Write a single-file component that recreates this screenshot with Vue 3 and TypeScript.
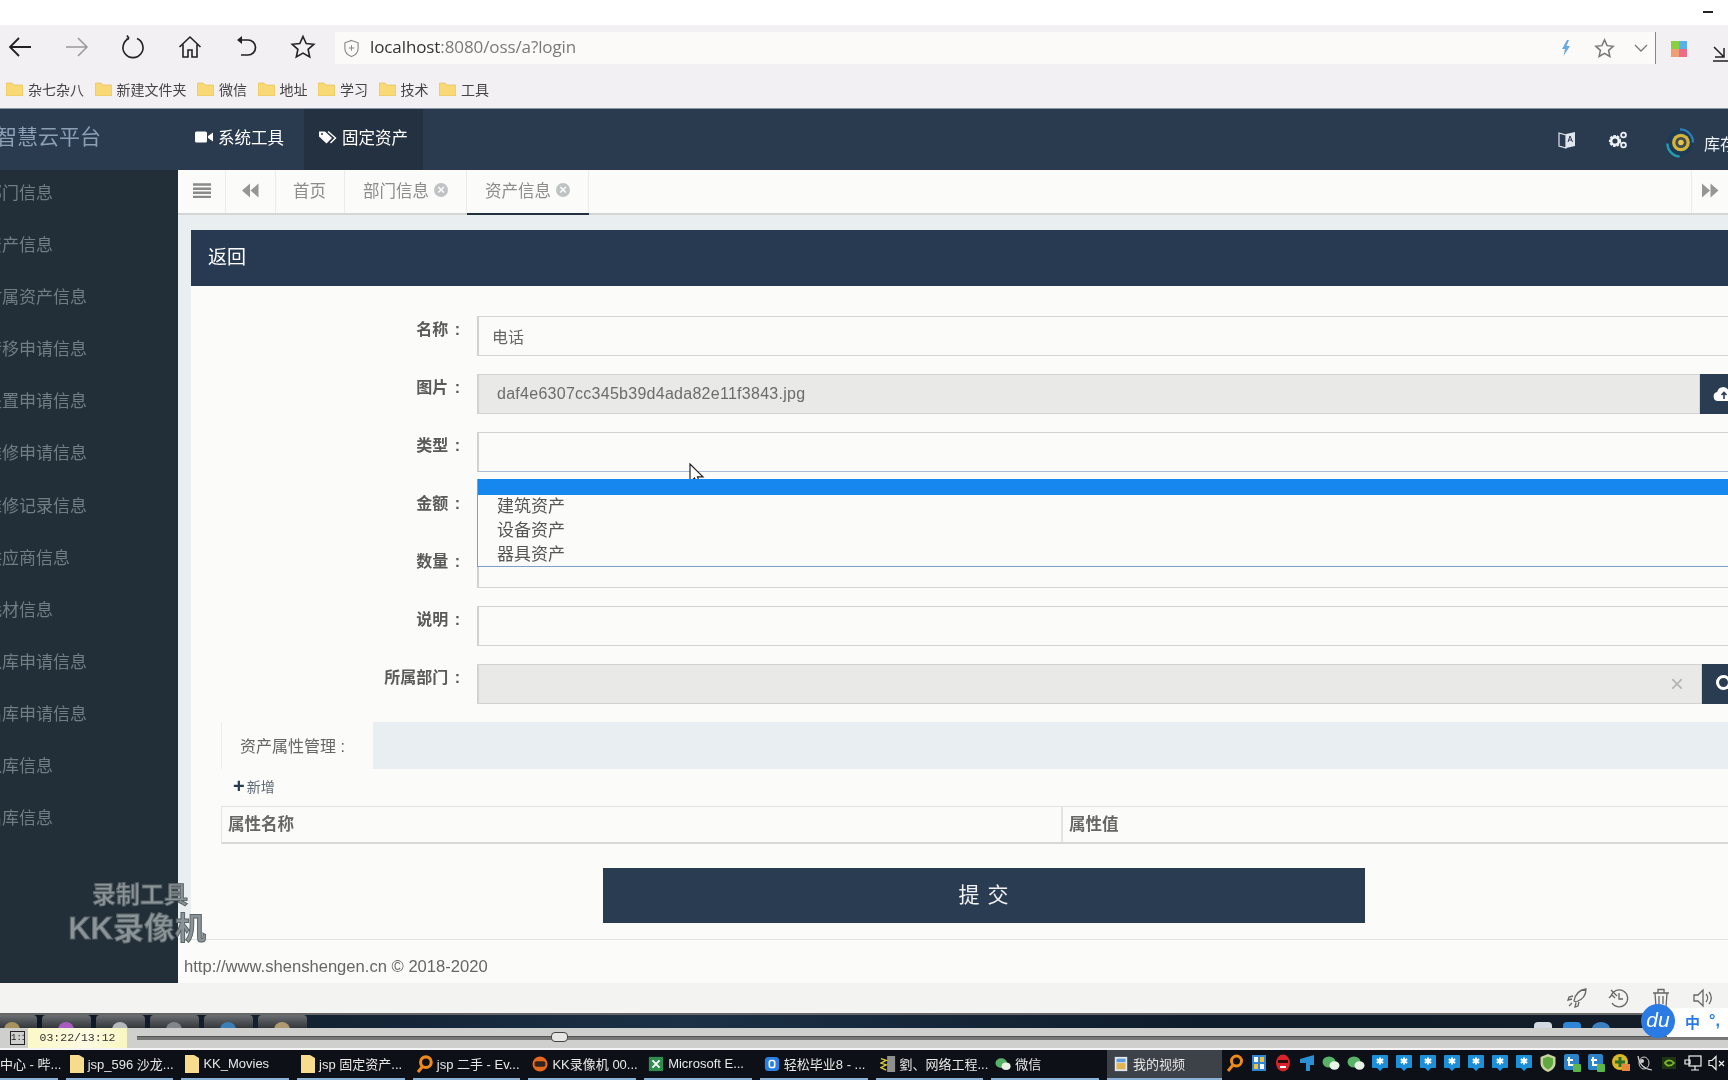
<script setup lang="ts">
type TaskIcon = 'none' | 'folder' | 'search' | 'kk' | 'excel' | 'app' | 'person' | 'wechat' | 'doc'
type TrayIcon = 'search' | 'grid' | 'red' | 'pin' | 'wechat' | 'star' | 'shield' | 'tc' | 'plus' | 'sat' | 'nv' | 'net' | 'mute'

const sideItems = [
  '部门信息', '资产信息', '附属资产信息', '转移申请信息', '处置申请信息', '维修申请信息', '维修记录信息',
  '供应商信息', '耗材信息', '入库申请信息', '出库申请信息', '入库信息', '出库信息',
]
const bookmarks = ['杂七杂八', '新建文件夹', '微信', '地址', '学习', '技术', '工具']
const thumbs = ['#a8935f', '#a85cc0', '#b4b9bd', '#80868b', '#3a7fb8', '#b09a70']
const tasks: Array<{ label: string; icon: TaskIcon; active?: boolean }> = [
  { label: '中心 - 哔...', icon: 'none' },
  { label: 'jsp_596 沙龙...', icon: 'folder' },
  { label: 'KK_Movies', icon: 'folder' },
  { label: 'jsp 固定资产...', icon: 'folder' },
  { label: 'jsp 二手 - Ev...', icon: 'search' },
  { label: 'KK录像机 00...', icon: 'kk' },
  { label: 'Microsoft E...', icon: 'excel' },
  { label: '轻松毕业8 - ...', icon: 'app' },
  { label: '劉、网络工程...', icon: 'person' },
  { label: '微信', icon: 'wechat' },
  { label: '我的视频', icon: 'doc', active: true },
]
const tray: TrayIcon[] = [
  'search', 'grid', 'red', 'pin', 'wechat', 'wechat', 'star', 'star', 'star', 'star', 'star', 'star', 'star',
  'shield', 'tc', 'tc', 'plus', 'sat', 'nv', 'net', 'mute',
]
</script>

<template>
  <div class="screen">
    <div class="top-strip"><span class="minimize"></span></div>

    <div class="toolbar">
      <div class="nav-icons">
        <svg class="nav-icon" viewBox="0 0 26 26"><path d="M24 13H3M12 4l-9 9 9 9" fill="none" stroke="#222" stroke-width="1.8" /></svg>
        <svg class="nav-icon" viewBox="0 0 26 26"><path d="M2 13h21M14 4l9 9-9 9" fill="none" stroke="#999" stroke-width="1.5" /></svg>
        <svg class="nav-icon" viewBox="0 0 26 26"><path d="M9 4.5a10 10 0 1 0 8 0M9 4.5l-2-3M9 4.5l-3 1" fill="none" stroke="#222" stroke-width="1.6" /></svg>
        <svg class="nav-icon" viewBox="0 0 26 26"><path d="M2.5 13L13 3l10.500 10M6 10.500V23h5v-7h4v7h5V10.500" fill="none" stroke="#222" stroke-width="1.6" /></svg>
        <svg class="nav-icon" viewBox="0 0 26 26"><path d="M5 6h10a7.5 7.5 0 0 1 0 15H8" fill="none" stroke="#222" stroke-width="1.7" /><path d="M9 2L4 6l5 4z" fill="#222" /></svg>
        <svg class="nav-icon" viewBox="0 0 26 26"><path d="M13 2.5l3.200 7 7.600.8-5.700 5.100 1.600 7.600-6.700-3.900-6.700 3.900 1.600-7.600-5.700-5.100 7.600-.8z" fill="none" stroke="#222" stroke-width="1.6" /></svg>
      </div>
      <div class="address">
        <svg class="shield" viewBox="0 0 18 20"><path d="M9 1.500l7 2.500v6c0 4-3 7-7 8.500-4-1.500-7-4.500-7-8.500V4z" fill="none" stroke="#888" stroke-width="1.2" /><path d="M9 6.500v6M6 9.500h6" stroke="#888" stroke-width="1.1" /></svg>
        <span class="url"><b>localhost</b>:8080/oss/a?login</span>
        <span class="address-end">
          <svg class="bolt" viewBox="0 0 10 16"><path d="M6 0L1 9h3l-1.500 7L9 6H5.500L8 0z" fill="#6aa9e0" /></svg>
          <svg class="addr-star" viewBox="0 0 22 22"><path d="M11 2l2.700 6 6.300.7-4.700 4.200 1.300 6.400-5.600-3.300-5.600 3.300 1.300-6.400L2 8.700 8.300 8z" fill="none" stroke="#777" stroke-width="1.6" /></svg>
          <svg class="chev" viewBox="0 0 14 8"><path d="M1 1l6 6 6-6" fill="none" stroke="#777" stroke-width="1.3" /></svg>
        </span>
      </div>
      <div class="tool-right">
        <span class="apps"><i class="g"></i><i class="b"></i><i class="o"></i><i class="r"></i></span>
        <svg class="download" viewBox="0 0 16 20"><path d="M1 4l10 10M11 5v9H2M0 18h16" fill="none" stroke="#222" stroke-width="1.5" /></svg>
      </div>
    </div>

    <div class="bookmarks">
      <span v-for="name in bookmarks" :key="name" class="bookmark">
        <svg class="folder" viewBox="0 0 17 14"><path d="M0 2a1 1 0 0 1 1-1h5l2 2h8a1 1 0 0 1 1 1v9a1 1 0 0 1-1 1H1a1 1 0 0 1-1-1z" fill="#f8d976" stroke="#e0b94a" stroke-width=".6" /></svg>
        {{ name }}
      </span>
    </div>

    <header class="app-header">
      <div class="logo">智慧云平台</div>
      <nav class="top-nav">
        <a class="top-nav__item">
          <svg class="top-nav__icon" viewBox="0 0 18 14"><rect x="0" y="1.500" width="12" height="11" rx="1.500" fill="#fff" /><path d="M13 6l5-3.500v9L13 8z" fill="#fff" /></svg>
          系统工具
        </a>
        <a class="top-nav__item top-nav__item--active">
          <svg class="top-nav__icon" viewBox="0 0 18 14"><path d="M0 1.500h6l7 6.500-5.500 5.500L0 6.500z" fill="#fff" /><path d="M9 1.500l7.500 6.500-5 5" fill="none" stroke="#fff" stroke-width="1.4" /><circle cx="3" cy="4" r="1" fill="#223040" /></svg>
          固定资产
        </a>
      </nav>
      <div class="header-right">
        <svg class="book-icon" viewBox="0 0 18 18"><path d="M1 2l7 2v13l-7-2z" fill="none" stroke="#dfe6ee" stroke-width="1.2" /><path d="M8 3l9-2v14l-9 2z" fill="#dfe6ee" /><path d="M10 11l2-6 2.500 6M10.800 9h3" stroke="#2a3b50" stroke-width="1" fill="none" /></svg>
        <svg class="cog-icon" viewBox="0 0 20 18">
          <circle cx="7" cy="10" r="4.500" fill="none" stroke="#eef2f6" stroke-width="3.200" stroke-dasharray="2.200 1" />
          <circle cx="7" cy="10" r="3.800" fill="none" stroke="#eef2f6" stroke-width="2.400" />
          <circle cx="15.500" cy="4" r="2.400" fill="none" stroke="#eef2f6" stroke-width="1.800" />
          <circle cx="15.500" cy="14" r="2.400" fill="none" stroke="#eef2f6" stroke-width="1.800" />
        </svg>
        <svg class="avatar" viewBox="0 0 30 32">
          <circle cx="15" cy="16" r="14" fill="#1c3a56" />
          <path d="M15 2a14 14 0 0 1 14 14" fill="none" stroke="#2c7fb8" stroke-width="2.500" />
          <path d="M1.500 17a14 14 0 0 0 13 14" fill="none" stroke="#23a0b0" stroke-width="2.500" />
          <circle cx="16" cy="16" r="9.500" fill="#d4b53a" />
          <circle cx="16" cy="16" r="6" fill="#3f4a4f" />
          <circle cx="16" cy="16" r="3" fill="#e4c64c" />
        </svg>
        <span class="username">库存</span>
      </div>
    </header>

    <div class="app-body">
      <aside class="sidebar">
        <a v-for="item in sideItems" :key="item" class="sidebar__item">{{ item }}</a>
      </aside>

      <main class="main">
        <div class="tabs">
          <span class="tabs__btn tabs__btn--menu">
            <svg width="18" height="15" viewBox="0 0 18 15"><path d="M0 1.500h18M0 5.700h18M0 9.800h18M0 14h18" stroke="#8a8a8a" stroke-width="2.4" /></svg>
          </span>
          <span class="tabs__btn tabs__btn--back">
            <svg width="17" height="15" viewBox="0 0 17 14"><path d="M8 0v14L0 7zM16.500 0v14L8.500 7z" fill="#969696" /></svg>
          </span>
          <a class="tab tab--home">首页</a>
          <a class="tab">部门信息<span class="tab__close">×</span></a>
          <a class="tab tab--active">资产信息<span class="tab__close">×</span></a>
          <span class="tabs__btn tabs__btn--next">
            <svg width="17" height="15" viewBox="0 0 17 14"><path d="M0 0v14l8-7zM8.500 0v14l8-7z" fill="#969696" /></svg>
          </span>
        </div>

        <div class="content">
          <section class="card">
            <div class="card__head">返回</div>
            <form class="form" @submit.prevent>
              <div class="row">
                <label class="row__label">名称 :</label>
                <div class="field">电话</div>
              </div>
              <div class="row">
                <label class="row__label">图片 :</label>
                <div class="field field--disabled field--file">daf4e6307cc345b39d4ada82e11f3843.jpg</div>
                <span class="addon addon--upload">
                  <svg width="22" height="16" viewBox="0 0 22 16"><path d="M5 15a4.500 4.500 0 0 1-.8-8.900A6 6 0 0 1 15.500 4.500 5 5 0 0 1 17 15z" fill="#fff" /><path d="M11 13V7M8.500 9L11 6.500 13.500 9" fill="none" stroke="#2a3c52" stroke-width="1.6" /></svg>
                </span>
              </div>
              <div class="row">
                <label class="row__label">类型 :</label>
                <div class="field field--open">
                  <div class="options">
                    <div class="options__blank"></div>
                    <div class="options__item">建筑资产</div>
                    <div class="options__item">设备资产</div>
                    <div class="options__item">器具资产</div>
                  </div>
                </div>
              </div>
              <div class="row">
                <label class="row__label">金额 :</label>
                <div class="field"></div>
              </div>
              <div class="row">
                <label class="row__label">数量 :</label>
                <div class="field"></div>
              </div>
              <div class="row">
                <label class="row__label">说明 :</label>
                <div class="field"></div>
              </div>
              <div class="row">
                <label class="row__label">所属部门 :</label>
                <div class="field field--disabled field--clear"><span class="clear">×</span></div>
                <span class="addon addon--search">
                  <svg width="20" height="20" viewBox="0 0 20 20"><circle cx="8.500" cy="8.500" r="6" fill="none" stroke="#fff" stroke-width="3" /><path d="M13 13l5.500 5.500" stroke="#fff" stroke-width="3" /></svg>
                </span>
              </div>

              <div class="attr">
                <div class="attr__bar"><span class="attr__tab">资产属性管理 :</span></div>
                <a class="attr__add"><b>+</b>新增</a>
                <div class="attr__table">
                  <div class="attr__cell attr__cell--name">属性名称</div>
                  <div class="attr__cell">属性值</div>
                </div>
              </div>

              <button type="button" class="submit">提 交</button>
            </form>
          </section>
          <footer class="page-footer">http://www.shenshengen.cn © 2018-2020</footer>
        </div>
      </main>
    </div>

    <div class="player-tools">
      <svg class="tool" viewBox="0 0 22 22"><path d="M8 14C9 8 13 3 20 2c0 7-4 11-10 13zM7 9l-4 1-1 3 4-1M13 15l-1 4-3 1 1-4M6 16l-3 3" fill="none" stroke="#666" stroke-width="1.3" /></svg>
      <svg class="tool" viewBox="0 0 22 22"><path d="M3 9a8.500 8.500 0 1 1 1 7M3 3l6 6M1 11l3-3 3 3" fill="none" stroke="#666" stroke-width="1.3" /><path d="M11 6v6h4" fill="none" stroke="#666" stroke-width="1.3" /></svg>
      <svg class="tool" viewBox="0 0 22 22"><path d="M3 6h16M8 6V2.500h6V6M5 6l1 14h10l1-14M9 9v8M13 9v8" fill="none" stroke="#666" stroke-width="1.3" /></svg>
      <svg class="tool" viewBox="0 0 22 22"><path d="M2 8v6h4l5 5V3L6 8z" fill="none" stroke="#666" stroke-width="1.3" /><path d="M14 7a6 6 0 0 1 0 8M17 5a9 9 0 0 1 0 12" fill="none" stroke="#666" stroke-width="1.3" /></svg>
    </div>

    <div class="thumb-band">
      <span v-for="(color, i) in thumbs" :key="i" class="thumb"><i :style="{ background: color }"></i></span>
      <span class="band-icons"><i class="bi bi--w"></i><i class="bi bi--b"></i><i class="bi bi--r"></i></span>
    </div>

    <div class="player-bar">
      <span class="ratio">1:1</span>
      <span class="time">03:22/13:12</span>
      <span class="seek"><i class="seek__knob"></i></span>
    </div>

    <div class="taskbar">
      <div class="tasks">
        <div v-for="task in tasks" :key="task.label" class="task" :class="{ 'task--active': task.active, 'task--plain': task.icon === 'none' }">
          <svg v-if="task.icon === 'folder'" class="task__icon task__icon--folder" viewBox="0 0 14 20"><path d="M0 1h9l5 3v15H0z" fill="#f6dc8c" /></svg>
          <svg v-else-if="task.icon === 'search'" class="task__icon" viewBox="0 0 18 20"><circle cx="10" cy="8" r="6" fill="none" stroke="#ee8a1c" stroke-width="3.5" /><path d="M6 13l-5 6" stroke="#ee8a1c" stroke-width="3.5" /></svg>
          <svg v-else-if="task.icon === 'kk'" class="task__icon" viewBox="0 0 18 20"><circle cx="9" cy="10" r="8.500" fill="#e2691f" /><rect x="3" y="7" width="12" height="6" rx="2" fill="#33231b" /></svg>
          <svg v-else-if="task.icon === 'excel'" class="task__icon" viewBox="0 0 18 20"><rect x="1" y="2" width="16" height="16" fill="#2f8d4e" /><path d="M5 6l8 8M13 6l-8 8" stroke="#fff" stroke-width="2" /></svg>
          <svg v-else-if="task.icon === 'app'" class="task__icon" viewBox="0 0 18 20"><rect x="1" y="2" width="16" height="16" rx="4" fill="#2b7fe0" /><rect x="6" y="6" width="6" height="8" rx="2" fill="none" stroke="#fff" stroke-width="1.8" /></svg>
          <svg v-else-if="task.icon === 'person'" class="task__icon" viewBox="0 0 18 20"><rect x="8" y="1" width="9" height="18" fill="#8f8f8c" /><path d="M1 4l6 2-6 3 6 2-6 3 6 3" fill="none" stroke="#d7c83c" stroke-width="1.6" /></svg>
          <svg v-else-if="task.icon === 'wechat'" class="task__icon" viewBox="0 0 18 20"><ellipse cx="7" cy="9" rx="6.500" ry="5.500" fill="#58b368" /><ellipse cx="12.500" cy="12.500" rx="5" ry="4.200" fill="#e8f2e6" /></svg>
          <svg v-else-if="task.icon === 'doc'" class="task__icon" viewBox="0 0 18 20"><rect x="2" y="2" width="14" height="16" fill="#dfe7f0" /><rect x="4" y="9" width="10" height="7" fill="#e0b552" /><rect x="4" y="4" width="10" height="4" fill="#5d9ad6" /></svg>
          <span class="task__label">{{ task.label }}</span>
        </div>
      </div>

      <div class="tray">
        <span v-for="(icon, i) in tray" :key="i" class="tray__slot">
          <svg v-if="icon === 'search'" viewBox="0 0 18 18"><circle cx="10.500" cy="7" r="5" fill="none" stroke="#ee8a1c" stroke-width="3" /><path d="M7 11l-5 6" stroke="#ee8a1c" stroke-width="3" /></svg>
          <svg v-else-if="icon === 'grid'" viewBox="0 0 18 18"><rect x="2" y="1" width="14" height="16" fill="#2f86d6" /><rect x="4" y="3" width="4" height="5" fill="#fff" /><rect x="10" y="3" width="4" height="5" fill="#f2c23a" /><rect x="4" y="10" width="4" height="5" fill="#f2c23a" /><rect x="10" y="10" width="4" height="5" fill="#fff" /></svg>
          <svg v-else-if="icon === 'red'" viewBox="0 0 18 18"><ellipse cx="9" cy="9" rx="7" ry="8.500" fill="#d8232a" /><rect x="4" y="6" width="10" height="3" fill="#2a0c0c" /><rect x="6" y="12" width="6" height="2" fill="#fff" /></svg>
          <svg v-else-if="icon === 'pin'" viewBox="0 0 18 18"><path d="M2 5l14-4v10h-4v6H8v-8H2z" fill="#2b8fd6" /></svg>
          <svg v-else-if="icon === 'wechat'" viewBox="0 0 18 18"><ellipse cx="7" cy="8" rx="6.500" ry="5.500" fill="#58b368" /><ellipse cx="12.500" cy="11.500" rx="5" ry="4.200" fill="#e8f2e6" /></svg>
          <svg v-else-if="icon === 'star'" viewBox="0 0 18 18"><path d="M2 1h14a1 1 0 0 1 1 1v11a1 1 0 0 1-1 1h-4l-3 3-3-3H2a1 1 0 0 1-1-1V2a1 1 0 0 1 1-1z" fill="#1b8fd8" /><path d="M9 3.500v7M5.800 5.200l6.400 3.600M12.200 5.200L5.800 8.800" stroke="#fff" stroke-width="1.9" /></svg>
          <svg v-else-if="icon === 'shield'" viewBox="0 0 18 18"><path d="M9 0l7.500 3v6c0 4-3 7.500-7.500 9-4.500-1.500-7.500-5-7.500-9V3z" fill="#c9d4a0" /><path d="M9 2.500l5 2v4.500c0 3-2 5-5 6.500-3-1.500-5-3.500-5-6.500V4.500z" fill="#5fa93f" /></svg>
          <svg v-else-if="icon === 'tc'" viewBox="0 0 18 18"><rect x="1" y="0" width="15" height="16" rx="2" fill="#2e84c8" /><path d="M6 3v8h5M4 6h6" fill="none" stroke="#fff" stroke-width="2" /><rect x="10" y="10" width="8" height="8" rx="1" fill="#5bb64a" /></svg>
          <svg v-else-if="icon === 'plus'" viewBox="0 0 18 18"><circle cx="8" cy="8" r="8" fill="#d8b826" /><path d="M8 3v10M3 8h10" stroke="#2c6d2c" stroke-width="3" /><rect x="10" y="10" width="8" height="7" fill="#e58a3a" /></svg>
          <svg v-else-if="icon === 'sat'" viewBox="0 0 18 18"><path d="M2 2c1 8 6 13 14 14" fill="none" stroke="#cfcfcf" stroke-width="1.2" /><ellipse cx="8" cy="9" rx="5" ry="6" fill="none" stroke="#cfcfcf" stroke-width="1" /><circle cx="6" cy="7" r="2" fill="#cfcfcf" /></svg>
          <svg v-else-if="icon === 'nv'" viewBox="0 0 18 18"><rect x="2" y="3" width="14" height="12" fill="#1f3412" /><path d="M5 9c2-3.500 6-3.500 9 0-3 3.500-7 3.500-9 0z" fill="none" stroke="#78b82a" stroke-width="1.8" /></svg>
          <svg v-else-if="icon === 'net'" viewBox="0 0 18 18"><rect x="5" y="2" width="12" height="10" fill="none" stroke="#f2f2f2" stroke-width="1.2" /><path d="M1 6h5v4H1zM11 12v4M7 16h8" fill="none" stroke="#f2f2f2" stroke-width="1.2" /></svg>
          <svg v-else viewBox="0 0 18 18"><path d="M1 6.500v5h3l4 4v-13l-4 4z" fill="none" stroke="#f2f2f2" stroke-width="1.2" /><path d="M11 7l5 5M16 7l-5 5" stroke="#f2f2f2" stroke-width="1.2" /></svg>
        </span>
      </div>
    </div>

    <!-- overlays: recorder watermark, mouse pointer, input method badge -->
    <div class="watermark">
      <div class="watermark__small">录制工具</div>
      <div class="watermark__big">KK录像机</div>
    </div>
    <svg class="cursor" viewBox="0 0 16 25"><path d="M1 1v18l4.500-4 3 7.500 3-1.300-3-7.300H14z" fill="#fff" stroke="#222" stroke-width="1.2" /></svg>
    <div class="ime">
      <span class="ime__du">du</span>
      <span class="ime__zh">中</span>
      <span class="ime__dot">°,</span>
    </div>
  </div>
</template>

<style>
html,
body {
  margin: 0;
  background: #fff;
  overflow: hidden;
}
</style>

<style scoped>
/* the reference is a frame of a compressed video, hence the slight softening */
.screen {
  position: relative;
  display: flex;
  flex-direction: column;
  width: 1728px;
  height: 1080px;
  overflow: hidden;
  font-family: "Liberation Sans", "Noto Sans CJK SC", sans-serif;
  color: #555;
  background: #fff;
  filter: blur(0.4px);
}

.top-strip {
  flex: 0 0 25px;
  display: flex;
  justify-content: flex-end;
  align-items: flex-start;
  background: #fff;
}

.minimize {
  width: 10px;
  height: 1.5px;
  margin: 11px 15px 0 0;
  background: #222;
}

.toolbar {
  flex: 0 0 53px;
  display: flex;
  align-items: flex-start;
  background: #f2f0f2;
}

.nav-icons {
  display: flex;
  width: 335px;
  flex: 0 0 335px;
  gap: 30.5px;
  padding: 9px 0 0 7px;
  box-sizing: border-box;
}

.nav-icon {
  width: 26px;
  height: 26px;
  flex: 0 0 26px;
}

.address {
  flex: 0 0 1320px;
  height: 32px;
  margin-top: 7px;
  display: flex;
  align-items: center;
  background: #fbfaf8;
  border-right: 1px solid #888;
}

.shield {
  width: 17px;
  height: 19px;
  margin-left: 8px;
}

.url {
  margin: 0 0 3px 10px;
  font-family: "Open Sans", "Noto Sans", sans-serif;
  font-size: 17px;
  color: #7a7a7a;
  letter-spacing: -0.1px;
}

.url b {
  font-weight: 400;
  color: #333;
}

.address-end {
  margin-left: auto;
  display: flex;
  align-items: center;
}

.bolt {
  width: 10px;
  height: 16px;
  margin-right: 23px;
}

.addr-star {
  width: 21px;
  height: 21px;
  margin-right: 19px;
}

.chev {
  width: 14px;
  height: 8px;
  margin-right: 7px;
}

.tool-right {
  display: flex;
  align-items: center;
  height: 32px;
  margin-top: 8px;
  padding-left: 15px;
  gap: 26px;
}

.apps {
  display: grid;
  grid-template-columns: 8px 8px;
  grid-template-rows: 8px 8px;
}

.apps i {
  display: block;
}

.apps .g { background: #86d23e; }
.apps .b { background: #58b0ec; }
.apps .o { background: #ee9f73; }
.apps .r { background: #ea6c86; }

.download {
  width: 16px;
  height: 20px;
  flex: 0 0 16px;
  margin-top: 8px;
}

.bookmarks {
  flex: 0 0 30px;
  display: flex;
  align-items: center;
  gap: 10.5px;
  padding-left: 6px;
  padding-bottom: 9px;
  box-sizing: border-box;
  background: #f2f0f2;
  font-size: 14px;
  color: #444;
}

.bookmark {
  display: flex;
  align-items: center;
  gap: 5px;
}

.folder {
  width: 17px;
  height: 14px;
}

.app-header {
  flex: 0 0 62px;
  display: flex;
  align-items: stretch;
  background: #2a3b50;
  border-top: 1px solid #8a97a5;
  box-sizing: border-box;
}

.logo {
  width: 184px;
  margin-left: -4px;
  flex: 0 0 auto;
  line-height: 56px;
  font-size: 21px;
  color: #8ba0b5;
}

.top-nav {
  display: flex;
}

.top-nav__item {
  display: flex;
  align-items: center;
  gap: 5px;
  padding: 0 15px 6px;
  font-size: 16.5px;
  color: #fff;
}

.top-nav__item--active {
  margin-left: 5px;
  background: #243140;
}

.top-nav__icon {
  width: 18px;
  height: 14px;
}

.header-right {
  margin-left: auto;
  display: flex;
  align-items: center;
  width: 170px;
  flex: 0 0 170px;
  padding-top: 6px;
  box-sizing: border-box;
}

.book-icon {
  flex: 0 0 18px;
  height: 18px;
  margin: -6px 32px 0 0;
}

.cog-icon {
  flex: 0 0 20px;
  height: 18px;
  margin: -6px 38px 0 0;
}

.avatar {
  width: 28px;
  height: 31px;
  flex: 0 0 28px;
}

.username {
  margin-left: 10px;
  font-size: 16px;
  color: #eef2f6;
  white-space: nowrap;
}

.app-body {
  flex: 0 0 813px;
  display: flex;
  min-height: 0;
}

.sidebar {
  flex: 0 0 178px;
  background: #222f38;
  overflow: hidden;
}

.sidebar__item {
  display: block;
  height: 52.1px;
  margin-left: -15px;
  line-height: 48px;
  font-size: 17px;
  color: #727d84;
  white-space: nowrap;
}

.main {
  flex: 1;
  min-width: 0;
  display: flex;
  flex-direction: column;
  background: #e9eef1;
}

.tabs {
  flex: 0 0 45px;
  display: flex;
  align-items: stretch;
  box-sizing: border-box;
  background: #fbfbfa;
  border-bottom: 2px solid #d4d6d6;
  font-size: 16.5px;
  color: #8c8c8c;
}

.tabs__btn {
  display: flex;
  align-items: center;
  justify-content: center;
  padding-bottom: 3px;
  border-right: 1px solid #ececea;
}

.tabs__btn--menu {
  width: 47px;
}

.tabs__btn--back {
  width: 49px;
}

.tabs__btn--next {
  margin-left: auto;
  width: 36px;
  border-right: 0;
  border-left: 1px solid #ececea;
}

.tab {
  display: flex;
  align-items: center;
  gap: 5px;
  padding: 0 18px 4px;
  border-right: 1px solid #ececea;
}

.tab--home {
  padding-left: 17px;
}

.tab--active {
  box-shadow: 0 2px 0 #223040;
}

.tab__close {
  display: inline-flex;
  align-items: center;
  justify-content: center;
  width: 14px;
  height: 14px;
  border-radius: 50%;
  background: #bfc3c3;
  color: #fbfbfa;
  font-size: 13px;
  line-height: 14px;
  font-weight: 700;
}

.content {
  flex: 1;
  min-height: 0;
  display: flex;
  flex-direction: column;
  padding-top: 15px;
}

.card {
  flex: 1;
  min-height: 0;
  margin-left: 13px;
  display: flex;
  flex-direction: column;
  background: #fbfbf9;
}

.card__head {
  flex: 0 0 56px;
  padding-left: 17px;
  line-height: 56px;
  font-size: 19px;
  color: #fff;
  background: #283a52;
}

.form {
  width: 1569px;
  padding-top: 30px;
}

.row {
  display: flex;
  height: 40px;
  margin-bottom: 18px;
}

.row__label {
  flex: 0 0 269px;
  height: 28px;
  line-height: 28px;
  text-align: right;
  font-size: 16px;
  font-weight: 700;
  word-spacing: 2px;
  color: #5a5a5a;
  margin-right: 17px;
}

.field {
  position: relative;
  flex: 1;
  min-width: 0;
  box-sizing: border-box;
  padding-left: 13px;
  display: flex;
  align-items: center;
  border: 1px solid #d2d2d0;
  border-left-width: 2px;
  font-size: 16px;
  color: #666;
  background: #fbfbf9;
}

.field--disabled {
  background: #e9eae8;
}

.field--file {
  padding-left: 18px;
  letter-spacing: 0.27px;
  color: #6c6c6a;
}

.field--open {
  border-bottom-color: #a9bdd8;
}

.field--clear {
  justify-content: flex-end;
}

.clear {
  margin-right: 17px;
  font-size: 24px;
  line-height: 24px;
  color: #b5b5b5;
}

.options {
  position: absolute;
  z-index: 2;
  top: 46px;
  left: -2px;
  right: -1px;
  height: 88px;
  box-sizing: border-box;
  border-left: 1px solid #7d9cc6;
  border-bottom: 1px solid #7d9cc6;
  background: #fbfbf9;
}

.options__blank {
  height: 16px;
  background: #1787f0;
}

.options__item {
  height: 24px;
  line-height: 24px;
  padding-left: 19px;
  font-size: 17px;
  color: #555;
}

.addon {
  flex: 0 0 60px;
  display: flex;
  align-items: center;
  padding-left: 13px;
  box-sizing: border-box;
  background: #2a3c52;
}

.addon--search {
  flex-basis: 58px;
}

.attr {
  margin-left: 30px;
}

.attr__bar {
  height: 47px;
  background: #e8eef1;
}

.attr__tab {
  display: block;
  width: 152px;
  height: 47px;
  box-sizing: border-box;
  padding-left: 18px;
  line-height: 49px;
  font-size: 16px;
  color: #666;
  background: #fbfbf9;
  border-left: 1px solid #eeeeec;
}

.attr__add {
  display: flex;
  align-items: center;
  height: 37px;
  padding: 0 0 3px 12px;
  box-sizing: border-box;
  font-size: 14px;
  color: #5e6a76;
}

.attr__add b {
  margin-right: 2px;
  font-size: 20px;
  line-height: 20px;
  color: #2a3c52;
}

.attr__table {
  display: flex;
  height: 38px;
  box-sizing: border-box;
  border: 1px solid #e4e4e2;
  border-right: 0;
  border-bottom: 2px solid #d8d8d6;
}

.attr__cell {
  flex: 1;
  padding-left: 6px;
  line-height: 34px;
  font-size: 16.5px;
  font-weight: 700;
  color: #666;
}

.attr__cell--name {
  flex: 0 0 841px;
  border-right: 2px solid #e4e4e2;
  box-sizing: border-box;
}

.submit {
  display: block;
  width: 762px;
  height: 55px;
  margin: 24px 0 0 412px;
  padding: 0 0 5px;
  border: 0;
  background: #2a3c52;
  color: #f2f2f2;
  font-family: inherit;
  font-size: 21px;
  letter-spacing: 1px;
}

.page-footer {
  flex: 0 0 43px;
  box-sizing: border-box;
  padding: 10px 0 0 6px;
  line-height: 33px;
  font-size: 16.6px;
  color: #666;
  background: #fbfbf9;
  border-top: 1px solid #e2e3e1;
}

.player-tools {
  flex: 0 0 30px;
  display: flex;
  align-items: center;
  justify-content: flex-end;
  gap: 20px;
  padding-right: 14px;
  box-sizing: border-box;
  background: #f3f3f1;
}

.tool {
  width: 22px;
  height: 22px;
}

.thumb-band {
  flex: 0 0 15px;
  display: flex;
  align-items: flex-start;
  gap: 5px;
  margin-left: -12px;
  overflow: hidden;
  background: linear-gradient(90deg, #0c1522, #1c3146 40%, #0f1c2b 70%, #141d28);
  border-top: 2px solid #666;
  box-sizing: border-box;
}

.thumb {
  position: relative;
  flex: 0 0 49px;
  height: 15px;
  border-radius: 4px 4px 0 0;
  background: linear-gradient(#6b6f72, #2b2e32);
}

.thumb i {
  position: absolute;
  left: 16px;
  top: 7px;
  width: 16px;
  height: 16px;
  border-radius: 50%;
}

.band-icons {
  margin-left: auto;
  display: flex;
  gap: 11px;
  padding: 7px 118px 0 0;
}

.bi {
  width: 18px;
  height: 14px;
  border-radius: 4px 4px 0 0;
}

.bi--w { background: #d4dae2; }
.bi--b { background: #2f86d6; }
.bi--r { background: #3b7fc0; border-radius: 50% 50% 0 0; }

.player-bar {
  flex: 0 0 22px;
  display: flex;
  align-items: center;
  box-sizing: border-box;
  background: #cfcfcd;
  border-bottom: 2px solid #f4f4f4;
}

.ratio {
  flex: 0 0 13px;
  height: 12px;
  margin-left: 10px;
  border: 1px solid #222;
  font-family: "Liberation Mono", monospace;
  font-size: 9px;
  line-height: 12px;
  text-align: center;
  color: #222;
  overflow: hidden;
}

.time {
  flex: 0 0 99px;
  height: 20px;
  margin-left: 3px;
  line-height: 20px;
  text-align: center;
  font-family: "Liberation Mono", monospace;
  font-size: 11.5px;
  color: #333;
  background: linear-gradient(90deg, #fbf8c8, #fdfbe2 60%, #f9f6c0);
}

.seek {
  position: relative;
  flex: 1;
  height: 3px;
  margin-left: 10px;
  background: #777;
  border-top: 1px solid #555;
}

.seek__knob {
  position: absolute;
  left: 414px;
  top: -5px;
  width: 15px;
  height: 8px;
  border-radius: 4px;
  border: 1px solid #444;
  background: #e6e6e4;
}

.taskbar {
  flex: 1;
  min-height: 0;
  display: flex;
  position: relative;
  background: #0d1016;
}

.tasks {
  display: flex;
  gap: 8px;
  margin-left: -50px;
}

.task {
  flex: 0 0 107.7px;
  min-width: 0;
  display: flex;
  align-items: center;
  gap: 4px;
  padding: 0 0 1px 4px;
  box-sizing: border-box;
  border-bottom: 2px solid #8ab1d6;
  white-space: nowrap;
  font-size: 13px;
  color: #e8e8e8;
}

.task--plain {
  padding-left: 50px;
}

.task--active {
  flex-basis: 115px;
  padding-left: 6px;
  background: #3d4148;
}

.task__icon {
  width: 16px;
  height: 20px;
  flex: 0 0 16px;
}

.task__icon--folder {
  width: 14px;
  flex-basis: 14px;
}

.tray {
  position: absolute;
  top: 4px;
  left: 1223px;
  display: flex;
}

.tray__slot {
  flex: 0 0 24.1px;
  display: flex;
  justify-content: center;
}

.tray__slot svg {
  width: 18px;
  height: 18px;
}

.watermark {
  position: absolute;
  left: 64px;
  top: 879px;
  width: 142px;
  text-align: right;
  font-weight: 700;
  color: #8b9498;
  -webkit-text-stroke: 1px #5b6468;
}

.watermark__small {
  padding-right: 18px;
  font-size: 24px;
  line-height: 32px;
}

.watermark__big {
  font-size: 31px;
  line-height: 36px;
  white-space: nowrap;
}

.cursor {
  position: absolute;
  left: 689px;
  top: 463px;
  width: 16px;
  height: 25px;
}

.ime {
  position: absolute;
  left: 1641px;
  top: 1004px;
  width: 87px;
  height: 34px;
  display: flex;
  align-items: center;
}

.ime::before {
  content: "";
  position: absolute;
  left: 26px;
  right: 0;
  top: 4px;
  bottom: 1px;
  background: #fff;
}

.ime__du {
  position: relative;
  width: 34px;
  height: 34px;
  border-radius: 50%;
  background: #2a7be4;
  color: #fff;
  font-size: 21px;
  font-style: italic;
  line-height: 32px;
  text-align: center;
}

.ime__zh {
  position: relative;
  margin-left: 10px;
  font-size: 15px;
  font-weight: 700;
  color: #2a7be4;
}

.ime__dot {
  position: relative;
  margin-left: 9px;
  font-size: 16px;
  font-weight: 700;
  color: #2a7be4;
}
</style>
